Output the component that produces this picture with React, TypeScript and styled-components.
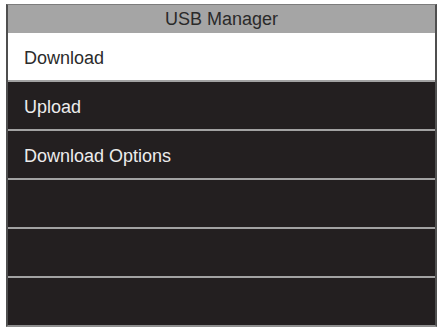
import { createGlobalStyle } from 'styled-components';
import styled from 'styled-components';

const GlobalStyle = createGlobalStyle`
  html, body {
    margin: 0;
    padding: 0;
    background: #ffffff;
  }
  body {
    font-family: 'Liberation Sans', Arial, sans-serif;
  }
`;

const items = ['Download', 'Upload', 'Download Options', '', '', ''];

export default function App() {
  return (
    <>
      <GlobalStyle />
      <Screen>
        <Header>USB Manager</Header>
        <Menu>
          {items.map((label, i) => (
            <Row key={i} selected={i === 0} first={i === 0}>
              {label}
            </Row>
          ))}
        </Menu>
      </Screen>
    </>
  );
}

const Screen = styled.div`
  width: 427px;
  height: 320px;
  margin: 4px 0 0 6px;
  display: flex;
  flex-direction: column;
  border-left: 2px solid #4f4f4f;
  border-right: 2px solid #4f4f4f;
  border-top: 1px solid #7c7c7c;
  border-bottom: 2px solid #8e8e8e;
  background: #231f20;
`;

const Header = styled.div`
  height: 28px;
  flex: none;
  display: flex;
  align-items: center;
  justify-content: center;
  background: #a5a5a5;
  color: #2a2a2a;
  font-size: 18px;
  padding-top: 1px;
  box-sizing: border-box;
`;

const Menu = styled.div`
  flex: 1;
  display: flex;
  flex-direction: column;
`;

const Row = styled.div<{ selected?: boolean; first?: boolean }>`
  flex: 1;
  display: flex;
  align-items: center;
  padding: 3px 0 0 16px;
  font-size: 18px;
  background: ${(p) => (p.selected ? '#ffffff' : '#231f20')};
  color: ${(p) => (p.selected ? '#2b2b2b' : '#ececec')};
  border-top: ${(p) => (p.first ? 'none' : '2px solid #a2a2a2')};
`;
